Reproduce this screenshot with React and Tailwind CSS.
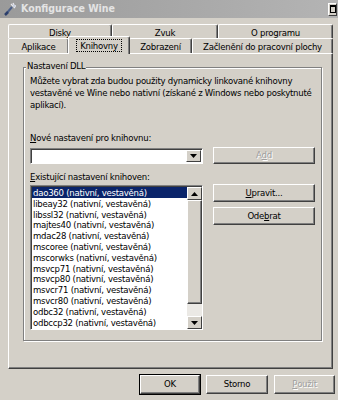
import React from "react";

const items = [
  "dao360",
  "libeay32",
  "libssl32",
  "majtes40",
  "mdac28",
  "mscoree",
  "mscorwks",
  "msvcp71",
  "msvcp80",
  "msvcr71",
  "msvcr80",
  "odbc32",
  "odbccp32",
];

function Arrow({ up }) {
  return (
    <svg width="7" height="4" viewBox="0 0 7 4">
      {up ? <path d="M0 4 L3.5 0 L7 4 Z" fill="#000" /> : <path d="M0 0 L3.5 4 L7 0 Z" fill="#000" />}
    </svg>
  );
}

function Button({ children, className = "", disabled, isDefault }) {
  return (
    <div
      className={`flex items-center justify-center bg-[#d4d0c8] border border-t-white border-l-white border-r-[#404040] border-b-[#404040] shadow-[inset_-1px_-1px_0_#808080] ${
        isDefault ? "outline outline-1 outline-black" : ""
      } ${disabled ? "text-[#a0a0a0] [text-shadow:1px_1px_0_#fff]" : "text-black"} ${className}`}
    >
      {children}
    </div>
  );
}

function Tab({ label, w, selected }) {
  return (
    <div
      style={{ width: w }}
      className={`flex items-center justify-center bg-[#d4d0c8] border-t border-l border-t-white border-l-white border-r border-r-[#404040] shadow-[inset_-1px_0_0_#808080] rounded-t-[2px] ${
        selected ? "relative z-10 h-[18px] -mb-[1px] -mx-[1px]" : "h-[15px]"
      }`}
    >
      {selected ? (
        <span className="border border-dotted border-black px-[3px] leading-[11px]">{label}</span>
      ) : (
        <span className="leading-[11px]">{label}</span>
      )}
    </div>
  );
}

export default function App() {
  return (
    <div className="w-[338px] h-[400px] overflow-hidden bg-[#d4d0c8] text-[9.5px] tracking-[-0.25px] text-black font-['DejaVu_Sans_Condensed','DejaVu_Sans',sans-serif]">
      {/* title bar */}
      <div className="h-[18px] flex items-center bg-gradient-to-r from-[#9a9a9a] to-[#b4b4b4] pl-[4px] pr-[1px]">
        <svg width="14" height="14" viewBox="0 0 14 14">
          <path d="M2 12 L8 5" stroke="#4a5f8a" strokeWidth="2" />
          <path d="M1 13 L4 10" stroke="#2c3f6b" strokeWidth="2.5" />
          <path d="M7 2 L11 6 M9 1 L10 3 M12 4 L10 4" stroke="#e8e8f0" strokeWidth="1.3" />
          <circle cx="10" cy="4" r="1.2" fill="#c8d0e0" />
        </svg>
        <span className="ml-[3px] font-bold text-[#e4e4e4] text-[10.5px] tracking-normal">Konfigurace Wine</span>
        <div className="ml-auto w-[9px] h-[13px] bg-[#d4d0c8] border border-t-white border-l-white border-r-[#404040] border-b-[#404040] flex items-center justify-end">
          <div className="w-[6px] h-[8px] border border-black border-t-2" />
        </div>
      </div>

      <div className="pl-[8px] pr-[5px] pt-[6px]">
        {/* tabs */}
        <div className="flex h-[14px] items-start overflow-hidden">
          <Tab label="Disky" w={104} />
          <Tab label="Zvuk" w={106} />
          <Tab label="O programu" w={115} />
        </div>
        <div className="flex items-end h-[15px]">
          <Tab label="Aplikace" w={61} />
          <Tab label="Knihovny" w={62} selected />
          <Tab label="Zobrazení" w={63} />
          <Tab label="Začlenění do pracovní plochy" w={141} />
        </div>

        {/* panel */}
        <div className="w-[325px] h-[316px] border border-t-white border-l-white border-r-[#404040] border-b-[#404040] shadow-[inset_-1px_-1px_0_#808080] pt-[13px] pl-[14px] pr-[10px]">
          <div className="relative h-[274px] border border-[#808080] shadow-[inset_1px_1px_0_#fff,1px_1px_0_#fff] pl-[6px] pt-[7px]">
            <span className="absolute -top-[8px] left-[2px] bg-[#d4d0c8] px-[1px] leading-[11px]">Nastavení DLL</span>
            <p className="leading-[12px] whitespace-nowrap">
              Můžete vybrat zda budou použity dynamicky linkované knihovny
              <br />
              vestavěné ve Wine nebo nativní (získané z Windows nebo poskytnuté
              <br />
              aplikací).
            </p>

            <div className="mt-[21px] leading-[12px]">
              <span className="underline">N</span>ové nastavení pro knihovnu:
            </div>
            <div className="mt-[3px] flex items-center">
              <div className="w-[173px] h-[16px] bg-white border border-t-[#808080] border-l-[#808080] border-r-white border-b-white shadow-[inset_1px_1px_0_#404040] flex justify-end p-[1px]">
                <div className="w-[15px] h-full bg-[#d4d0c8] border border-t-white border-l-white border-r-[#404040] border-b-[#404040] flex items-center justify-center">
                  <Arrow />
                </div>
              </div>
              <Button className="ml-[10px] w-[102px] h-[17px]" disabled>
                A<span className="underline">d</span>d
              </Button>
            </div>

            <div className="mt-[7px] leading-[12px]">
              <span className="underline">E</span>xistující nastavení knihoven:
            </div>
            <div className="mt-[2px] flex items-start">
              <div className="w-[173px] h-[145px] bg-white border border-t-[#808080] border-l-[#808080] border-r-white border-b-white shadow-[inset_1px_1px_0_#404040] flex pl-[1px] pt-[1px]">
                <div className="flex-1 overflow-hidden">
                  {items.map((n, i) => (
                    <div
                      key={n}
                      className={`h-[10.8px] leading-[11px] pl-[1px] whitespace-nowrap ${
                        i === 0 ? "bg-[#0a246a] text-white" : ""
                      }`}
                    >
                      {n} (nativní, vestavěná)
                    </div>
                  ))}
                </div>
                <div className="w-[15px] flex flex-col bg-[#ebe9e5]">
                  <div className="h-[13px] bg-[#d4d0c8] border border-t-white border-l-white border-r-[#404040] border-b-[#404040] flex items-center justify-center">
                    <Arrow up />
                  </div>
                  <div className="h-[104px] bg-[#d4d0c8] border border-t-white border-l-white border-r-[#404040] border-b-[#404040] shadow-[inset_-1px_-1px_0_#808080]" />
                  <div className="flex-1" />
                  <div className="h-[13px] bg-[#d4d0c8] border border-t-white border-l-white border-r-[#404040] border-b-[#404040] flex items-center justify-center">
                    <Arrow />
                  </div>
                </div>
              </div>
              <div className="ml-[10px] w-[102px] flex flex-col gap-[5px] -mt-[1px]">
                <Button className="h-[18px]">
                  <span className="underline">U</span>pravit...
                </Button>
                <Button className="h-[18px]">
                  Ode<span className="underline">b</span>rat
                </Button>
              </div>
            </div>
          </div>
        </div>
      </div>

      {/* footer */}
      <div className="mt-[6px] flex justify-end gap-[6px] pr-[3px]">
        <Button className="w-[60px] h-[19px]" isDefault>
          OK
        </Button>
        <Button className="w-[62px] h-[19px]">Storno</Button>
        <Button className="w-[61px] h-[19px]" disabled>
          <span className="underline">P</span>oužít
        </Button>
      </div>
    </div>
  );
}
